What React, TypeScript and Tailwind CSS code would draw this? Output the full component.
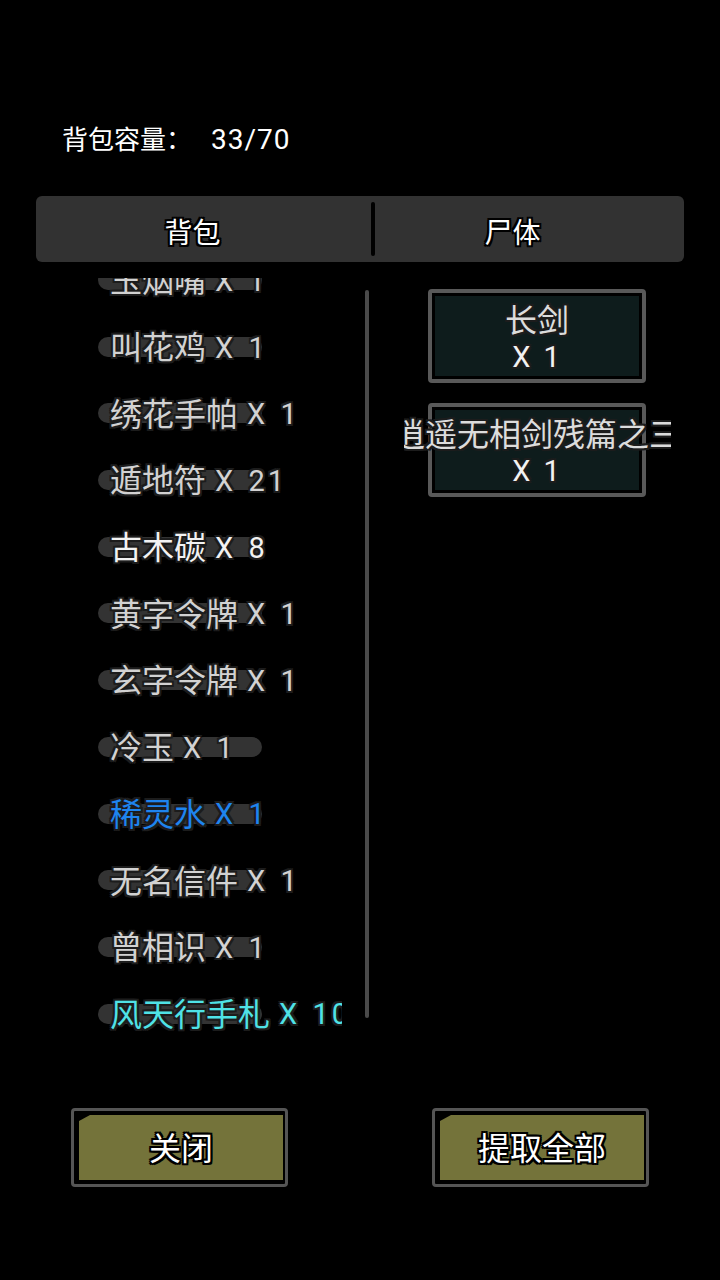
import React from "react";

const FONT = "font-['Roboto','Noto_Sans_CJK_SC',sans-serif]";

// dark outline used by list / card text
const SOFT_OUTLINE =
  "[text-shadow:-2px_-2px_0_#1c1c1c,2px_-2px_0_#1c1c1c,-2px_2px_0_#1c1c1c,2px_2px_0_#1c1c1c,0_2px_0_#1c1c1c,0_-2px_0_#1c1c1c,2px_0_0_#1c1c1c,-2px_0_0_#1c1c1c]";
// black outline used by tabs and buttons
const HARD_OUTLINE =
  "[text-shadow:-2px_-2px_0_#000,2px_-2px_0_#000,-2px_2px_0_#000,2px_2px_0_#000,0_2px_0_#000,0_-2px_0_#000,2px_0_0_#000,-2px_0_0_#000]";

interface BagItem {
  name: string;
  count: number;
  color: string;
}

const bagItems: BagItem[] = [
  { name: "玉烟嘴", count: 1, color: "text-[#d2d2d2]" },
  { name: "叫花鸡", count: 1, color: "text-[#d2d2d2]" },
  { name: "绣花手帕", count: 1, color: "text-[#d2d2d2]" },
  { name: "遁地符", count: 21, color: "text-[#d2d2d2]" },
  { name: "古木碳", count: 8, color: "text-[#f2f2f2]" },
  { name: "黄字令牌", count: 1, color: "text-[#d2d2d2]" },
  { name: "玄字令牌", count: 1, color: "text-[#d2d2d2]" },
  { name: "冷玉", count: 1, color: "text-[#d2d2d2]" },
  { name: "稀灵水", count: 1, color: "text-[#1e84ee]" },
  { name: "无名信件", count: 1, color: "text-[#d2d2d2]" },
  { name: "曾相识", count: 1, color: "text-[#d2d2d2]" },
  { name: "风天行手札", count: 10, color: "text-[#4fe2e6]" },
];

const corpseItems = [
  { name: "长剑", count: 1 },
  { name: "逍遥无相剑残篇之三", count: 1 },
];

function BagRow({ item }: { item: BagItem }) {
  return (
    <div className="relative flex h-[66.7px] shrink-0 items-center pl-[74px]">
      {/* pill behind the label */}
      <span className="absolute left-[62px] top-[23px] h-[20px] w-[164px] rounded-full bg-[#333333]" />
      <div className={`relative mt-[2px] flex items-center whitespace-nowrap leading-none ${item.color} ${SOFT_OUTLINE}`}>
        <span className="text-[32px]">{item.name}</span>
        <span className="ml-[9px] text-[29px] tracking-[3px] [word-spacing:2px]">X {item.count}</span>
      </div>
    </div>
  );
}

function CorpseCard({ name, count }: { name: string; count: number }) {
  return (
    <div className="w-[218px] rounded-[4px] border-[4px] border-[#595959] bg-black p-[3px]">
      <div className="flex h-[80px] flex-col items-center bg-[#0e1c1c] pt-[6px]">
        <div className="-mx-[28px] flex w-[267px] justify-center overflow-hidden">
          <span className={`whitespace-nowrap text-[32px] leading-[38px] text-[#dcdcdc] ${SOFT_OUTLINE}`}>{name}</span>
        </div>
        <span className={`text-[29px] leading-[38px] tracking-[2px] text-[#f2f2f2] [word-spacing:2px] ${SOFT_OUTLINE}`}>X {count}</span>
      </div>
    </div>
  );
}

function OliveButton({ label }: { label: string }) {
  return (
    <button className="h-[79px] w-[217px] rounded-[4px] border-[3px] border-[#555555] bg-black pb-[4px] pl-[5px] pr-[2px] pt-[4px]">
      <div className="flex h-full w-full items-center justify-center bg-[#74733a] pt-[2px] [clip-path:polygon(11px_0,100%_0,100%_100%,0_100%,0_6px)]">
        <span className={`text-[32px] leading-none text-white ${HARD_OUTLINE}`}>{label}</span>
      </div>
    </button>
  );
}

export default function App() {
  return (
    <div className={`h-[1280px] w-[720px] overflow-hidden bg-black ${FONT}`}>
      {/* capacity header */}
      <div className="flex h-[196px] items-center pl-[62px] pt-[88px] pb-[4px]">
        <span className="text-[26px] leading-none text-white">背包容量：</span>
        <span className="ml-[19px] text-[28px] leading-none tracking-[1px] text-white">33/70</span>
      </div>

      {/* tabs */}
      <div className="mx-[36px] flex h-[66px] items-center rounded-[6px] bg-[#323232]">
        <div className={`flex flex-1 justify-center pr-[22px] pt-[10px] text-[28px] leading-none text-white ${HARD_OUTLINE}`}>背包</div>
        <div className="h-[54px] w-[4px] rounded-full bg-black" />
        <div className={`flex w-[309px] justify-center pr-[34px] pt-[10px] text-[28px] leading-none text-white ${HARD_OUTLINE}`}>尸体</div>
      </div>

      {/* content */}
      <div className="mx-[36px] mt-[16px] flex h-[767px]">
        <div className="flex w-[335px]">
          <div className="flex h-full w-[306px] flex-col overflow-hidden">
            <div className="-mt-[31px] flex flex-col">
              {bagItems.map((item) => (
                <BagRow key={item.name} item={item} />
              ))}
            </div>
          </div>
          <div className="ml-[23px] mt-[12px] h-[728px] w-[4px] rounded-full bg-[#4a4a4a]" />
        </div>
        <div className="flex flex-1 flex-col items-start gap-[20px] pl-[57px] pt-[11px]">
          {corpseItems.map((c) => (
            <CorpseCard key={c.name} name={c.name} count={c.count} />
          ))}
        </div>
      </div>

      {/* bottom buttons */}
      <div className="mt-[63px] flex gap-[144px] pl-[71px]">
        <OliveButton label="关闭" />
        <OliveButton label="提取全部" />
      </div>
    </div>
  );
}
